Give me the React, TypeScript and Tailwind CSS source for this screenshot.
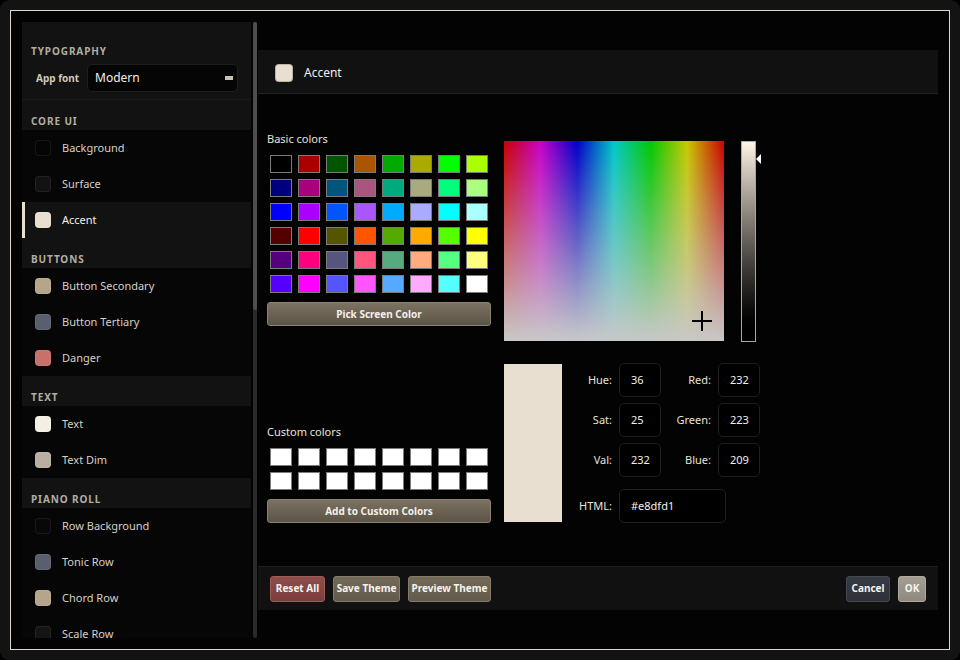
import React from "react";

const BASIC = [
  "#000000", "#aa0000", "#005500", "#aa5500", "#00aa00", "#aaaa00", "#00ff00", "#aaff00",
  "#00007f", "#aa007f", "#00557f", "#aa557f", "#00aa7f", "#aaaa7f", "#00ff7f", "#aaff7f",
  "#0000ff", "#aa00ff", "#0055ff", "#aa55ff", "#00aaff", "#aaaaff", "#00ffff", "#aaffff",
  "#550000", "#ff0000", "#555500", "#ff5500", "#55aa00", "#ffaa00", "#55ff00", "#ffff00",
  "#55007f", "#ff007f", "#55557f", "#ff557f", "#55aa7f", "#ffaa7f", "#55ff7f", "#ffff7f",
  "#5500ff", "#ff00ff", "#5555ff", "#ff55ff", "#55aaff", "#ffaaff", "#55ffff", "#ffffff",
];

type Item = { label: string; color: string; selected?: boolean };
type Section = { title: string; items: Item[] };

const SECTIONS: Section[] = [
  {
    title: "CORE UI",
    items: [
      { label: "Background", color: "#050505" },
      { label: "Surface", color: "#121212" },
      { label: "Accent", color: "#e8dfd1", selected: true },
    ],
  },
  {
    title: "BUTTONS",
    items: [
      { label: "Button Secondary", color: "#b5a68b" },
      { label: "Button Tertiary", color: "#5a5f6e" },
      { label: "Danger", color: "#c8706a" },
    ],
  },
  {
    title: "TEXT",
    items: [
      { label: "Text", color: "#f3efe4" },
      { label: "Text Dim", color: "#b9afa3" },
    ],
  },
  {
    title: "PIANO ROLL",
    items: [
      { label: "Row Background", color: "#080808" },
      { label: "Tonic Row", color: "#5a5f6e" },
      { label: "Chord Row", color: "#b5a68b" },
      { label: "Scale Row", color: "#141414" },
    ],
  },
];

function SectionHeader({ title }: { title: string }) {
  return (
    <div className="h-[30px] shrink-0 bg-[#121212] flex items-end pb-[3px] pl-[9px]">
      <span className="text-[10px] leading-[12px] font-bold tracking-[0.9px] text-[#b3ada3]">{title}</span>
    </div>
  );
}

function Row({ item }: { item: Item }) {
  return (
    <div
      className={
        item.selected
          ? "relative h-[36px] shrink-0 flex items-center pl-[13px] bg-[#121212]"
          : "relative h-[36px] shrink-0 flex items-center pl-[13px]"
      }
    >
      {item.selected && <div className="absolute left-0 top-0 bottom-0 w-[3px] bg-[#e8dfd1]" />}
      <div
        className="w-[16px] h-[16px] rounded-[4px] border border-[#ffffff12]"
        style={{ backgroundColor: item.color }}
      />
      <span
        className={
          item.selected
            ? "ml-[11px] text-[11px] leading-[14px] text-[#f4f0ea]"
            : "ml-[11px] text-[11px] leading-[14px] text-[#d6d0c6]"
        }
      >
        {item.label}
      </span>
    </div>
  );
}

function Sidebar() {
  return (
    <div className="w-[229px] h-full overflow-hidden flex flex-col bg-[#060606]">
      <div className="h-[78px] shrink-0 bg-[#121212] border-b border-[#1c1c1c] pt-[23px]">
        <div className="pl-[9px] text-[10px] leading-[12px] font-bold tracking-[0.9px] text-[#b3ada3]">
          TYPOGRAPHY
        </div>
        <div className="mt-[7px] flex items-center pl-[14px]">
          <span className="text-[10px] font-bold text-[#cfc8bd] w-[51px]">App font</span>
          <div className="w-[151px] h-[28px] rounded-[5px] bg-[#050505] border border-[#1e1e1e] flex items-center pl-[7px] pr-[4px]">
            <span className="text-[12px] text-[#f2eee8] flex-1">Modern</span>
            <div className="w-[8px] h-[4px] bg-[#c8c0b4]" />
          </div>
        </div>
      </div>
      {SECTIONS.map((s) => (
        <React.Fragment key={s.title}>
          <SectionHeader title={s.title} />
          {s.items.map((it) => (
            <Row key={it.label} item={it} />
          ))}
        </React.Fragment>
      ))}
    </div>
  );
}

function Cell({ color }: { color: string }) {
  return <div className="w-[22px] h-[18px] border border-[#7c7c7c]" style={{ backgroundColor: color }} />;
}

function ActionButton({ label }: { label: string }) {
  return (
    <div className="w-[224px] h-[24px] rounded-[3px] border border-[#8a8171] bg-gradient-to-b from-[#7b7262] to-[#5c5447] flex items-center justify-center">
      <span className="text-[10px] font-bold text-[#f4f0e8]">{label}</span>
    </div>
  );
}

function Spectrum() {
  return (
    <svg width="220" height="200" className="block">
      <defs>
        <linearGradient id="hue" x1="0" y1="0" x2="1" y2="0">
          <stop offset="0" stopColor="#c80000" />
          <stop offset="0.1667" stopColor="#c800c8" />
          <stop offset="0.3333" stopColor="#0000c8" />
          <stop offset="0.5" stopColor="#00c8c8" />
          <stop offset="0.6667" stopColor="#00c800" />
          <stop offset="0.8333" stopColor="#c8c800" />
          <stop offset="1" stopColor="#c80000" />
        </linearGradient>
        <linearGradient id="sat" x1="0" y1="0" x2="0" y2="1">
          <stop offset="0" stopColor="#c8c8c8" stopOpacity="0" />
          <stop offset="1" stopColor="#c8c8c8" stopOpacity="1" />
        </linearGradient>
      </defs>
      <rect x="0" y="0" width="220" height="200" fill="url(#hue)" />
      <rect x="0" y="0" width="220" height="200" fill="url(#sat)" />
      <line x1="188" y1="180" x2="208" y2="180" stroke="#000" strokeWidth="2" />
      <line x1="198" y1="170" x2="198" y2="190" stroke="#000" strokeWidth="2" />
    </svg>
  );
}

function Spin({ label, value, wide }: { label: string; value: string; wide?: boolean }) {
  return (
    <>
      <span className="w-[50px] text-right text-[11px] text-[#e6e2da]">{label}</span>
      <div
        className={
          wide
            ? "ml-[7px] w-[107px] h-[34px] rounded-[5px] border border-[#1f1f1f] bg-black flex items-center pl-[11px]"
            : "ml-[7px] w-[42px] h-[34px] rounded-[5px] border border-[#1f1f1f] bg-black flex items-center pl-[11px]"
        }
      >
        <span className="text-[11px] text-[#f2f0ec]">{value}</span>
      </div>
    </>
  );
}

function FooterButton({ label, cls }: { label: string; cls: string }) {
  return (
    <div className={cls}>
      <span className="text-[10px] font-bold text-[#f6f3ee]">{label}</span>
    </div>
  );
}

function Main() {
  return (
    <div className="w-[680px] h-full flex flex-col py-[28px]">
      <div className="h-[44px] shrink-0 bg-[#111111] border-b border-[#222222] flex items-center pl-[17px] pt-[2px]">
        <div className="w-[18px] h-[18px] rounded-[4px] bg-[#e8dfd1] border border-[#00000030]" />
        <span className="ml-[11px] text-[12px] text-[#f2f0ec]">Accent</span>
      </div>
      <div className="flex-1 pl-[9px] pt-[37px] flex">
        <div className="w-[224px] flex flex-col">
          <div className="h-[16px] text-[11px] leading-[16px] text-[#e8e4dc]">Basic colors</div>
          <div className="mt-[8px] pl-[3px] grid grid-cols-[repeat(8,22px)] gap-[6px]">
            {BASIC.map((c, i) => (
              <Cell key={i} color={c} />
            ))}
          </div>
          <div className="mt-[9px]">
            <ActionButton label="Pick Screen Color" />
          </div>
          <div className="mt-[98px] h-[16px] text-[11px] leading-[16px] text-[#e8e4dc]">Custom colors</div>
          <div className="mt-[8px] pl-[3px] grid grid-cols-[repeat(8,22px)] gap-[6px]">
            {Array.from({ length: 16 }).map((_, i) => (
              <Cell key={i} color="#ffffff" />
            ))}
          </div>
          <div className="mt-[9px]">
            <ActionButton label="Add to Custom Colors" />
          </div>
        </div>
        <div className="ml-[13px] mt-[10px] flex flex-col">
          <div className="flex items-start">
            <Spectrum />
            <div className="ml-[17px] relative w-[15px] h-[201px] border border-[#a8a8a8] bg-gradient-to-b from-[#fff5e6] to-black">
              <svg width="6" height="10" className="absolute left-[14px] top-[12px]">
                <polygon points="0,5 5,0 5,10" fill="#ffffff" />
              </svg>
            </div>
          </div>
          <div className="mt-[21px] flex items-start">
            <div className="mt-[1px] w-[58px] h-[158px] bg-[#e8dfd1]" />
            <div className="flex flex-col">
              <div className="flex items-center h-[34px]">
                <Spin label="Hue:" value="36" />
                <Spin label="Red:" value="232" />
              </div>
              <div className="mt-[6px] flex items-center h-[34px]">
                <Spin label="Sat:" value="25" />
                <Spin label="Green:" value="223" />
              </div>
              <div className="mt-[6px] flex items-center h-[34px]">
                <Spin label="Val:" value="232" />
                <Spin label="Blue:" value="209" />
              </div>
              <div className="mt-[12px] flex items-center h-[34px]">
                <Spin label="HTML:" value="#e8dfd1" wide />
              </div>
            </div>
          </div>
        </div>
      </div>
      <div className="h-[44px] shrink-0 bg-[#111111] border-t border-[#1e1e1e] flex items-center px-[12px]">
        <FooterButton
          label="Reset All"
          cls="w-[55px] h-[26px] rounded-[3px] border border-[#9e5b57] bg-gradient-to-b from-[#8e4d4a] to-[#7a3f3d] flex items-center justify-center"
        />
        <FooterButton
          label="Save Theme"
          cls="ml-[8px] w-[67px] h-[26px] rounded-[3px] border border-[#857c6b] bg-gradient-to-b from-[#736a59] to-[#625a4c] flex items-center justify-center"
        />
        <FooterButton
          label="Preview Theme"
          cls="ml-[8px] w-[83px] h-[26px] rounded-[3px] border border-[#857c6b] bg-gradient-to-b from-[#736a59] to-[#625a4c] flex items-center justify-center"
        />
        <div className="flex-1" />
        <FooterButton
          label="Cancel"
          cls="w-[44px] h-[26px] rounded-[3px] border border-[#444851] bg-gradient-to-b from-[#373b43] to-[#2e3138] flex items-center justify-center"
        />
        <FooterButton
          label="OK"
          cls="ml-[8px] w-[28px] h-[26px] rounded-[3px] border border-[#b0aaa0] bg-gradient-to-b from-[#a39d93] to-[#8f897f] flex items-center justify-center"
        />
      </div>
    </div>
  );
}

export default function App() {
  return (
    <div className="w-[960px] h-[660px] bg-black font-['Noto_Sans',sans-serif]">
      <div className="w-full h-full rounded-[9px] bg-[#131313] p-[10px]">
        <div className="w-full h-full border border-[#ded6ca] bg-[#030303] p-[11px] flex">
          <Sidebar />
          <div className="ml-[2px] w-[4px] h-full rounded-[2px] bg-[#2a2a2a] flex flex-col">
            <div className="h-[288px] rounded-[2px] bg-[#4e4e4e]" />
          </div>
          <div className="ml-[1px]">
            <Main />
          </div>
        </div>
      </div>
    </div>
  );
}
